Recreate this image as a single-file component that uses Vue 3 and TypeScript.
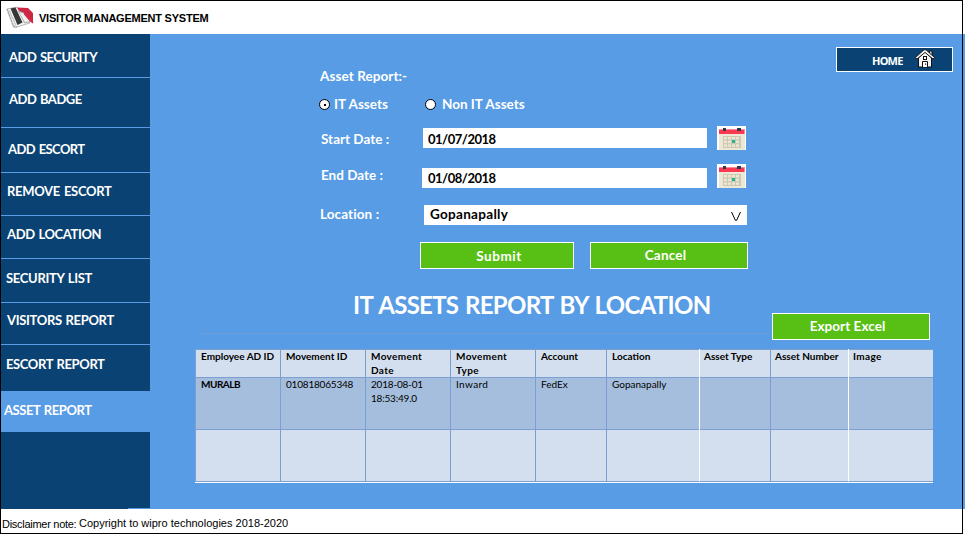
<script setup lang="ts">
import { ref } from 'vue'

interface MenuItem { label: string; key: string }
interface Cell { text: string; tone?: 'wide' | 'tight' | 'narrow' }

const menu: MenuItem[] = [
  { label: 'ADD SECURITY', key: 'add-security' },
  { label: 'ADD BADGE', key: 'add-badge' },
  { label: 'ADD ESCORT', key: 'add-escort' },
  { label: 'REMOVE ESCORT', key: 'remove-escort' },
  { label: 'ADD LOCATION', key: 'add-location' },
  { label: 'SECURITY LIST', key: 'security-list' },
  { label: 'VISITORS REPORT', key: 'visitors-report' },
  { label: 'ESCORT REPORT', key: 'escort-report' },
  { label: 'ASSET REPORT', key: 'asset-report' },
]
const active = ref('asset-report')
const assetKind = ref<'it' | 'non-it'>('it')

const headers: Cell[] = [
  { text: 'Employee AD ID' },
  { text: 'Movement ID' },
  { text: 'Movement Date', tone: 'wide' },
  { text: 'Movement Type', tone: 'wide' },
  { text: 'Account' },
  { text: 'Location' },
  { text: 'Asset Type' },
  { text: 'Asset Number' },
  { text: 'Image', tone: 'wide' },
]
const rows: Cell[][] = [
  [
    { text: 'MURALB', tone: 'narrow' },
    { text: '010818065348', tone: 'tight' },
    { text: '2018-08-01 18:53:49.0', tone: 'tight' },
    { text: 'Inward', tone: 'wide' },
    { text: 'FedEx' },
    { text: 'Gopanapally' },
    { text: '' },
    { text: '' },
    { text: '' },
  ],
  Array.from({ length: 9 }, () => ({ text: '' })),
]
const gridCols = [7, 11, 15, 19]
const gridRows = [11, 14.7, 18.4]
</script>

<template>
  <div class="page">
    <header class="titlebar">
      <svg class="logo" width="28" height="23" viewBox="0 0 28 23">
        <path d="M1 3 L11 1 L24 17 L9 21.5 L7.5 21 Z" fill="#f6f6f6" stroke="#a4a6a6" stroke-width=".8" />
        <path d="M1 3 L7.5 20 L11 21" fill="none" stroke="#a4a6a6" stroke-width="1.4" stroke-dasharray="2 1" />
        <path d="M3 4 L10 19.5" stroke="#c3c6c6" stroke-width="1.2" />
        <path d="M4.5 2.5 L9.5 1.5 L16.5 16.5 L11.5 19 Z" fill="#343734" />
        <path d="M11 1.5 L22 2 L27 7 L27 17 L19 9 L13 5 Z" fill="#cf2643" />
        <path d="M12.5 5 L18 7 L24.5 15.5 L18.5 17 Z" fill="#e9e9e9" stroke="#8b8b8b" stroke-width=".7" />
        <path d="M14.5 8 L20.5 15 M17 8 L23 15" stroke="#fff" stroke-width="1" />
        <path d="M18 7.5 L24 14.5 L27 17" fill="none" stroke="#cf2643" stroke-width="1.2" />
      </svg>
      <h1>VISITOR MANAGEMENT SYSTEM</h1>
    </header>

    <div class="body">
      <nav class="sidebar">
        <a
          v-for="item in menu"
          :key="item.key"
          :class="['item', item.key, { active: active === item.key }]"
          @click="active = item.key"
        >{{ item.label }}</a>
        <div class="notch"></div>
      </nav>

      <main class="main">
        <section class="top">
          <form class="form" @submit.prevent>
            <div class="caption">Asset Report:-</div>
            <div class="radios">
              <label class="radio it" @click="assetKind = 'it'">
                <span :class="['dot', { on: assetKind === 'it' }]"></span>IT Assets
              </label>
              <label class="radio" @click="assetKind = 'non-it'">
                <span :class="['dot', { on: assetKind === 'non-it' }]"></span><span class="non">Non IT Assets</span>
              </label>
            </div>
            <div class="row start">
              <span class="label">Start Date :</span>
              <div class="field">01/07/2018</div>
              <svg class="cal" width="29" height="24" viewBox="0 0 29 24">
                <rect width="29" height="24" fill="#fff" />
                <rect x="2" y="3" width="26" height="21" fill="#ece8d7" />
                <rect x="2" y="3" width="26" height="5" fill="#fb3a52" />
                <rect x="2" y="3" width="26" height="1" fill="#fb8896" />
                <rect x="27" y="3" width="1" height="5" fill="#fb8896" />
                <rect x="6" y="2" width="3" height="3" fill="#2c3a4e" />
                <rect x="20" y="2" width="4" height="3" fill="#2c3a4e" />
                <rect x="6" y="10" width="18" height="12" fill="#cec8ae" />
                <template v-for="y in gridRows" :key="y">
                  <rect v-for="x in gridCols" :key="x" :x="x" :y="y" width="3" height="2.4" fill="#ece8d7" />
                </template>
                <rect x="15" y="14" width="3" height="3" fill="#1fb492" />
              </svg>
            </div>
            <div class="row end">
              <span class="label">End Date :</span>
              <div class="field">01/08/2018</div>
              <svg class="cal" width="29" height="24" viewBox="0 0 29 24">
                <rect width="29" height="24" fill="#fff" />
                <rect x="2" y="3" width="26" height="21" fill="#ece8d7" />
                <rect x="2" y="3" width="26" height="5" fill="#fb3a52" />
                <rect x="2" y="3" width="26" height="1" fill="#fb8896" />
                <rect x="27" y="3" width="1" height="5" fill="#fb8896" />
                <rect x="6" y="2" width="3" height="3" fill="#2c3a4e" />
                <rect x="20" y="2" width="4" height="3" fill="#2c3a4e" />
                <rect x="6" y="10" width="18" height="12" fill="#cec8ae" />
                <template v-for="y in gridRows" :key="y">
                  <rect v-for="x in gridCols" :key="x" :x="x" :y="y" width="3" height="2.4" fill="#ece8d7" />
                </template>
                <rect x="15" y="14" width="3" height="3" fill="#1fb492" />
              </svg>
            </div>
            <div class="row location">
              <span class="label">Location :</span>
              <div class="field select">
                <span>Gopanapally</span>
                <svg width="10" height="9" viewBox="0 0 10 9">
                  <path d="M.5 0 L4.5 8.5 H5.5 L9.5 0" fill="none" stroke="#000" stroke-width="1" />
                </svg>
              </div>
            </div>
            <div class="actions">
              <button class="btn submit">Submit</button>
              <button class="btn cancel">Cancel</button>
            </div>
          </form>
          <button class="home">
            <span>HOME</span>
            <svg width="20" height="19" viewBox="0 0 20 19">
              <path d="M3.5 9 V18 H16.5 V9 L10 3 Z" fill="#f4f4f4" stroke="#111" stroke-width="1" />
              <path d="M14.5 2 H17 V7 L14.5 4.5 Z" fill="#ddd" stroke="#111" stroke-width="1" />
              <path d="M.5 8.5 L9 .8 H11 L19.5 8.5 L18 10 L10 3.4 L2 10 Z" fill="#f4f4f4" stroke="#111" stroke-width=".9" />
              <rect x="8.5" y="7.5" width="3" height="3" fill="#fff" stroke="#111" />
              <path d="M7.5 18 V12.5 H12.5 V18" fill="#fff" stroke="#111" />
              <rect x="10" y="14.5" width="1.2" height="1.2" fill="#111" />
            </svg>
          </button>
        </section>

        <section class="report">
          <div class="heading">
            <h2>IT ASSETS REPORT BY LOCATION</h2>
            <div class="rule-row">
              <span class="rule"></span>
              <button class="btn export">Export Excel</button>
              <span class="rule short"></span>
            </div>
          </div>
          <div class="table">
            <div class="tr head">
              <div v-for="cell in headers" :key="cell.text" :class="['td', cell.tone]">{{ cell.text }}</div>
            </div>
            <div v-for="(row, r) in rows" :key="r" class="tr">
              <div v-for="(cell, c) in row" :key="c" :class="['td', cell.tone]">{{ cell.text }}</div>
            </div>
          </div>
        </section>
      </main>
    </div>

    <footer class="footer">
      <span class="note">Disclaimer note:</span>
      <span class="copy">Copyright to wipro technologies 2018-2020</span>
    </footer>
    <div class="frame"></div>
  </div>
</template>

<style>
body { background: #fff; }
</style>

<style scoped>
* { box-sizing: border-box; }
.page {
  position: relative;
  width: 965px;
  height: 535px;
  overflow: hidden;
  display: flex;
  flex-direction: column;
  font: 700 13px/16px Lato, "Open Sans", sans-serif;
  color: #fff;
  background: #fff;
}
.frame {
  position: absolute;
  inset: 0 auto auto 0;
  width: 963px;
  height: 534px;
  border: 1px solid #000;
  pointer-events: none;
}
.titlebar { flex: none; height: 34px; display: flex; align-items: flex-start; padding: 6px 0 0 6px; color: #000; }
.titlebar h1 {
  margin: 5px 0 0 5px;
  font: 700 11px/14px "Liberation Sans", Arial, sans-serif;
  letter-spacing: -.23px;
}
.body { flex: none; height: 475px; display: flex; background: #589ce5; }
.sidebar {
  flex: none;
  width: 150px;
  height: 475px;
  display: flex;
  flex-direction: column;
  background: #0a4373;
}
.item { flex: none; border-bottom: 1px solid #589ce5; padding-left: 7px; white-space: nowrap; letter-spacing: -.38px; word-spacing: 1px; }
.add-security { height: 44px; padding: 15px 0 0 9px; letter-spacing: -.5px; }
.add-badge { height: 50px; padding: 13px 0 0 9px; letter-spacing: -.5px; }
.add-escort { height: 45px; padding: 13px 0 0 8px; letter-spacing: -.58px; }
.remove-escort { height: 43px; padding-top: 10px; letter-spacing: -.3px; }
.add-location { height: 43px; padding-top: 10px; }
.security-list { height: 44px; padding: 11px 0 0 6px; letter-spacing: -.32px; }
.visitors-report { height: 42px; padding-top: 9px; letter-spacing: -.33px; }
.escort-report { height: 46px; padding: 11px 0 0 6px; border-bottom: 0; }
.asset-report { height: 41px; padding: 11px 0 0 4px; border-bottom: 0; letter-spacing: -.42px; }
.item.active { background: #589ce5; }
.notch { flex: none; align-self: flex-end; margin-top: auto; width: 22px; height: 1px; background: #589ce5; }

.main { width: 812px; display: flex; flex-direction: column; }
.top { flex: none; display: flex; justify-content: space-between; align-items: flex-start; height: 256px; padding: 0 9px 0 170px; }
.form { width: 430px; padding-top: 34px; font-size: 13.5px; }
.caption { height: 28px; letter-spacing: .08px; }
.radios { display: flex; height: 30px; }
.radio { display: flex; align-items: flex-start; }
.radio.it { width: 106px; margin-left: -1px; }
.dot {
  flex: none;
  display: flex;
  width: 11px;
  height: 11px;
  margin: 3px 4px 0 0;
  border: 1px solid #000;
  border-radius: 50%;
  background: #fff;
}
.dot.on::after { content: ""; width: 2px; height: 2px; margin: auto; background: #000; }
.non { padding-left: 2px; }
.row { display: flex; align-items: flex-start; }
.label { flex: none; width: 103px; padding-left: 1px; }
.field { flex: none; width: 284px; height: 20px; padding: 3px 0 0 5px; background: #fff; color: #000; font-size: 13px; letter-spacing: -.48px; }
.cal { display: block; margin-left: 10px; }
.start { height: 38px; }
.start .label { margin-top: 5px; }
.start .field { margin-top: 2px; }
.end { height: 41px; }
.end .label { width: 102px; margin-top: 3px; }
.end .field { width: 285px; margin-top: 4px; padding: 2px 0 0 6px; }
.location { height: 37px; }
.location .label { width: 104px; padding-left: 0; margin-top: 1px; letter-spacing: .1px; }
.field.select { display: flex; justify-content: space-between; width: 323px; padding: 1px 6px 0 6px; font-size: 13.5px; letter-spacing: .3px; }
.select svg { margin-top: 6px; }
.actions { display: flex; gap: 16px; margin-left: 100px; }
.btn {
  flex: none;
  width: 158px;
  height: 27px;
  margin: 0;
  padding: 0 0 1px;
  border: 1px solid #fff;
  background: #58bf14;
  color: #fff;
  font: 700 13.5px/16px Lato, sans-serif;
  letter-spacing: .2px;
}
.btn.submit { width: 154px; padding: 1px 0 0 4px; letter-spacing: .55px; }
.btn.cancel { padding-right: 7px; }
.btn.export { padding: 0 7px 2px 0; letter-spacing: .05px; }
.home {
  display: flex;
  align-items: flex-start;
  width: 117px;
  height: 25px;
  margin: 13px 0 0;
  padding: 1px 0 0 35px;
  border: 1px solid #fff;
  background: #0a4373;
  color: #fff;
  font: 700 11px/16px "Noto Sans", sans-serif;
  letter-spacing: -.75px;
}
.home span { width: 43px; margin-top: 4px; text-align: left; }

.report { position: relative; }
.heading { height: 59px; }
.heading h2 {
  margin: 0 0 0 203px;
  height: 23px;
  font: 700 24px/30px Lato, sans-serif;
  letter-spacing: -.7px;
  word-spacing: 1.5px;
  white-space: nowrap;
}
.rule-row { display: flex; align-items: flex-start; margin-left: 51px; }
.rule { width: 567px; height: 1px; margin: 20px 4px 0 0; background: #6f9dd6; }
.rule.short { width: 4px; margin: 20px 0 0 4px; }
.table {
  width: 738px;
  margin-left: 45px;
  border-top: 1px solid #7a9fd0;
  border-left: 1px solid #7a9fd0;
  box-shadow: 0 1px 0 #fff;
  color: #000;
  font-size: 10px;
  line-height: 14px;
}
.tr { display: grid; grid-template: 100% / repeat(4, 85px) 71px 93px 71px 78px 84px; height: 52px; background: #d3dfee; }
.tr:nth-child(2) { background: #a6bedd; }
.tr.head { height: 28px; }
.td { margin-top: -1px; padding: 0 0 0 5px; font-weight: 400; border-right: 1px solid #7a9fd0; border-bottom: 1px solid #7a9fd0; }
.td:nth-child(n + 7) { padding-left: 4px; }
.td:nth-child(6), .td:nth-child(8) { border-right-color: #fff; }
.td:last-child { border-right: 0; }
.head .td, .td:first-child { font-weight: 700; }
.td:nth-child(3), .td:nth-child(4) { padding-right: 20px; }
.wide { letter-spacing: .35px; }
.tight { letter-spacing: -.2px; }
.narrow { letter-spacing: -.5px; }

.footer {
  flex: 1;
  display: flex;
  padding: 8px 0 0 2px;
  color: #000;
  font: 400 11px/14px "Liberation Sans", Arial, sans-serif;
}
.note { width: 77px; letter-spacing: -.28px; }
.copy { margin-top: -1px; }
</style>
